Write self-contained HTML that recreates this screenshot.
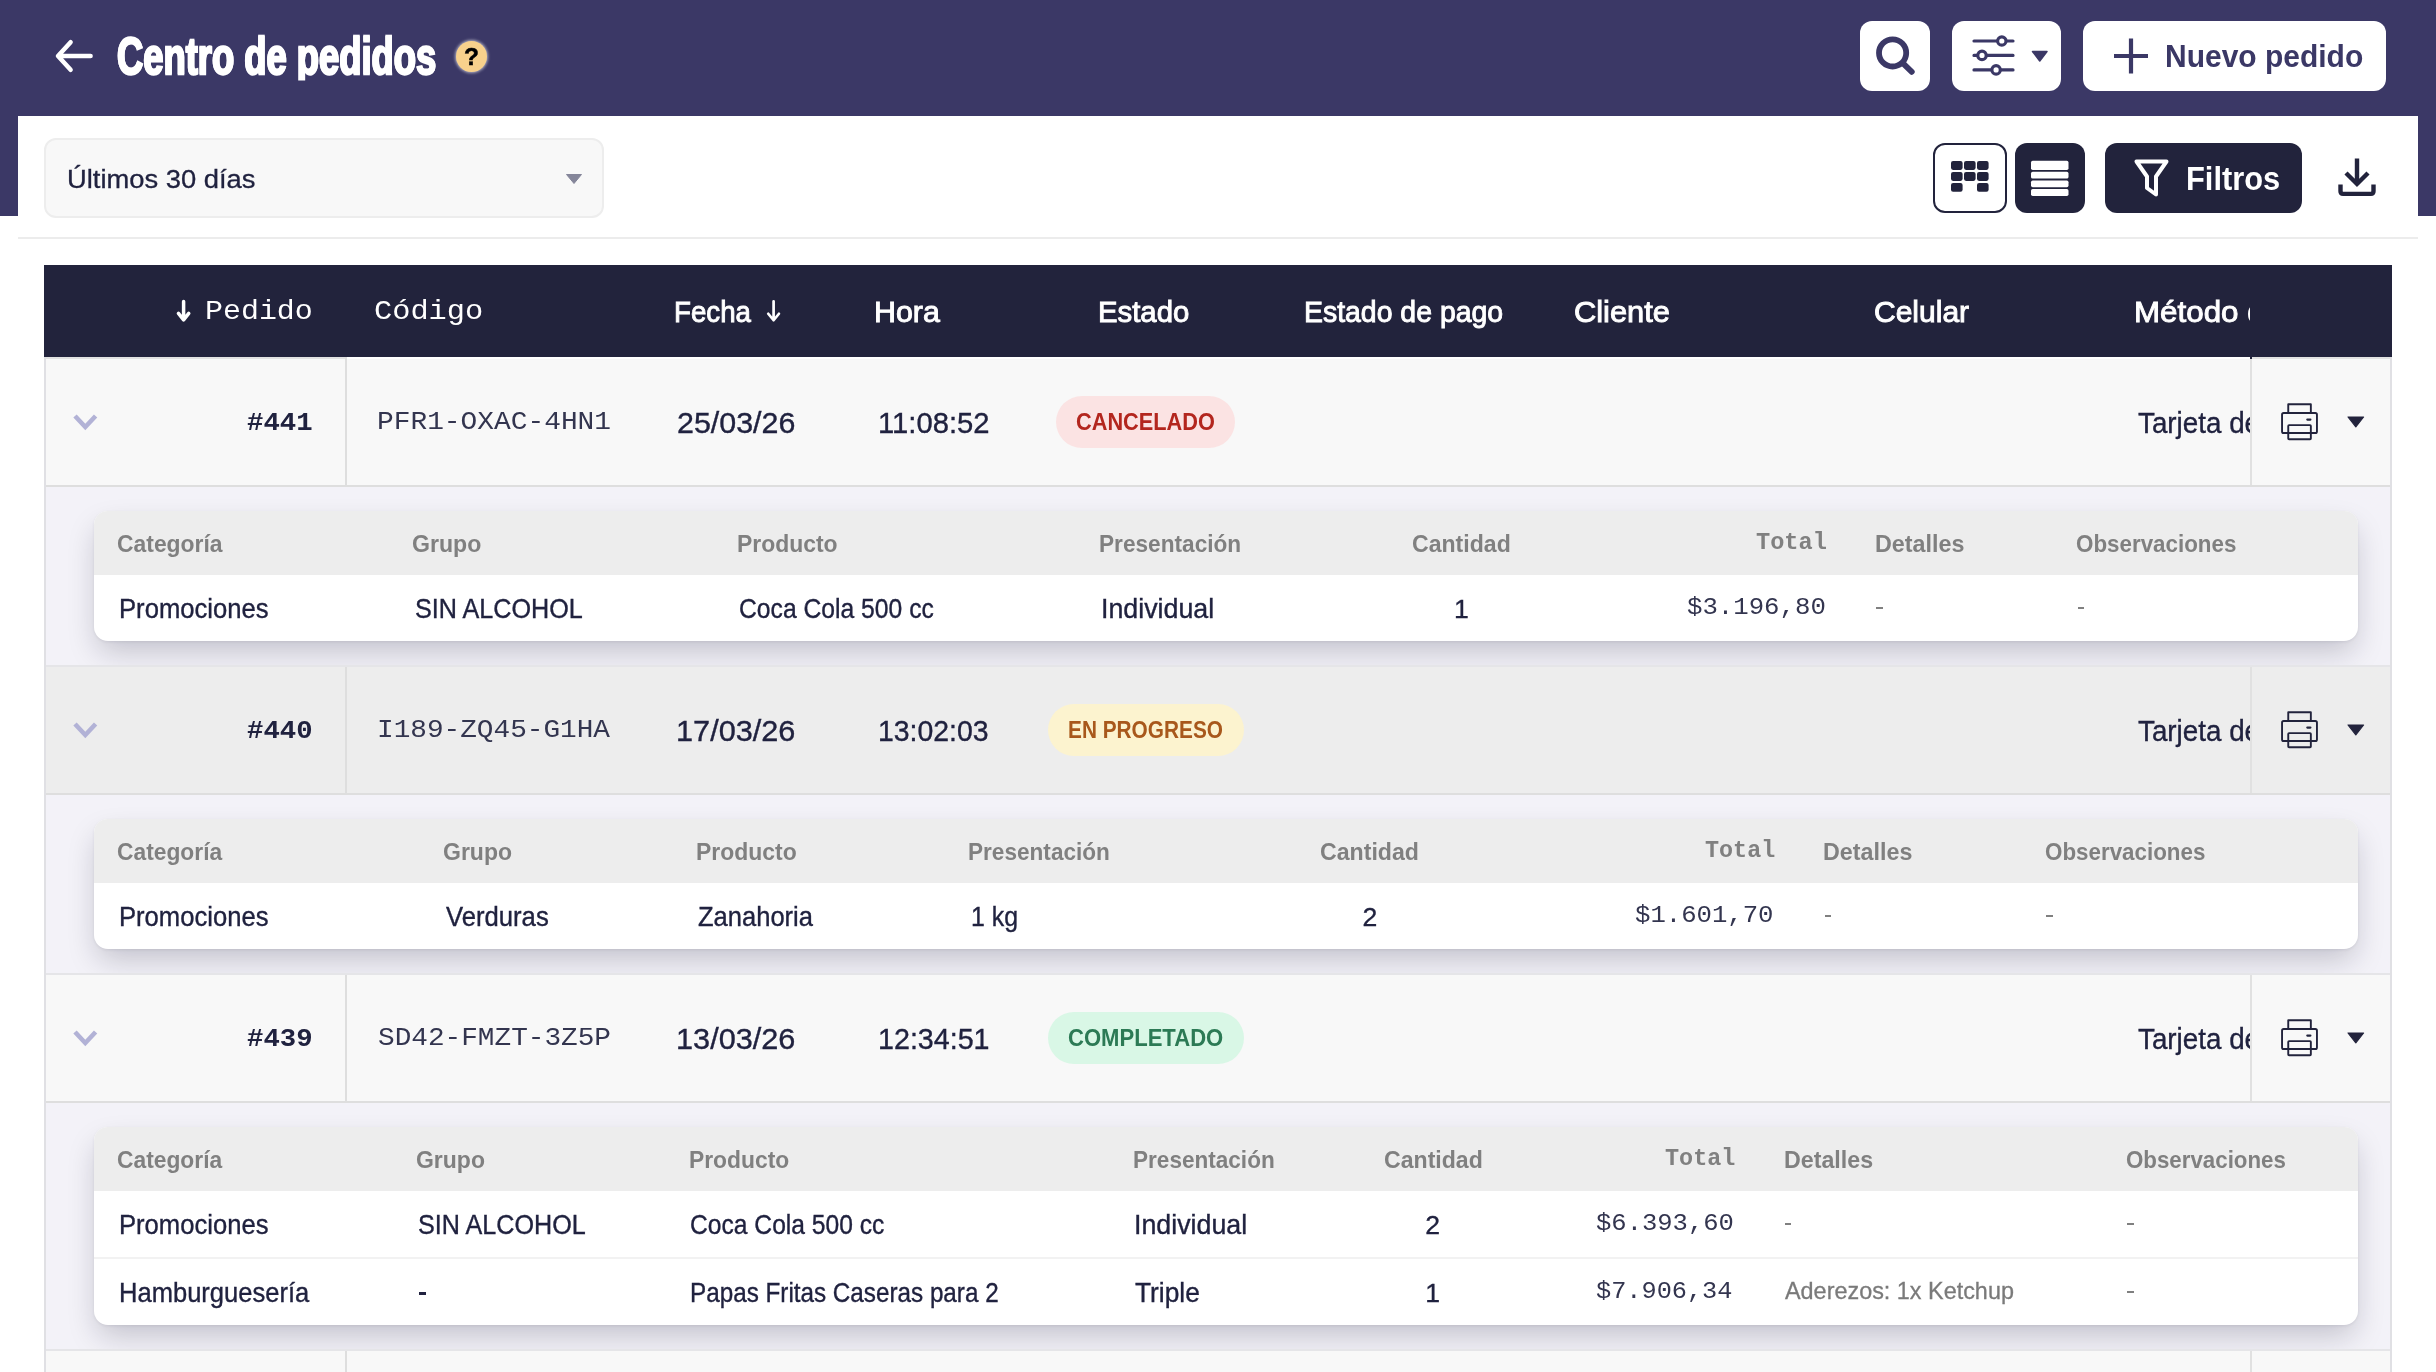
<!DOCTYPE html>
<html lang="es"><head><meta charset="utf-8"><title>Centro de pedidos</title>
<style>
html,body{margin:0;padding:0;}
body{width:2436px;height:1372px;overflow:hidden;background:#fff;position:relative;font-family:'Liberation Sans',sans-serif;}
.a{position:absolute;box-sizing:border-box;}
.t{position:absolute;white-space:pre;transform-origin:0 0;line-height:1;}
svg{position:absolute;overflow:visible;}
</style></head><body>
<div class="a" style="left:0;top:0;width:2436px;height:116px;background:#3b3866"></div>
<div class="a" style="left:0;top:116px;width:18px;height:100px;background:#3b3866"></div>
<div class="a" style="left:2418px;top:116px;width:18px;height:100px;background:#3b3866"></div>
<div class="a" style="left:18px;top:237px;width:2400px;height:2px;background:#ececec"></div>
<svg style="left:0;top:0" width="120" height="116"><path d="M90.6 56H58.4M70.6 42.2L58 56L70.6 69.8" fill="none" stroke="#fff" stroke-width="4.5" stroke-linecap="round" stroke-linejoin="round"/></svg>
<div class="a" style="left:456px;top:40.5px;width:31px;height:31px;border-radius:50%;background:#f8d18c;box-shadow:0 0 3px 1px rgba(255,255,255,.6)"></div>
<div class="a" style="left:1860px;top:21px;width:70px;height:70px;border-radius:12px;background:#fff"></div>
<div class="a" style="left:1952px;top:21px;width:109px;height:70px;border-radius:12px;background:#fff"></div>
<div class="a" style="left:2083px;top:21px;width:303px;height:70px;border-radius:12px;background:#fff"></div>
<svg style="left:0;top:0" width="2436" height="116"><circle cx="1892.6" cy="52.9" r="13.6" fill="none" stroke="#3b3866" stroke-width="5.8"/><path d="M1902.8 63.2L1911.8 71.8" stroke="#3b3866" stroke-width="5.8" stroke-linecap="round"/><g stroke="#3b3866" stroke-width="3.2" stroke-linecap="round" fill="#fff"><path d="M1974 41H2013M1974 55.4H2013M1974 69.9H2013"/><circle cx="2001.8" cy="41" r="4.2"/><circle cx="1982" cy="55.4" r="4.2"/><circle cx="1996.1" cy="69.9" r="4.2"/></g><path d="M2032.5 51.5h14.5l-7.25 9.5z" fill="#3b3866" stroke="#3b3866" stroke-width="1.5" stroke-linejoin="round"/><path d="M2114 56H2148M2131 38.5V73.5" stroke="#3b3866" stroke-width="4.2" stroke-linecap="butt"/></svg>
<div class="a" style="left:44px;top:138px;width:560px;height:80px;border-radius:12px;background:#f8f8f8;border:2px solid #ededed"></div>
<svg style="left:0;top:0" width="700" height="240"><path d="M566.5 174.5h15l-7.5 9z" fill="#85869a" stroke="#85869a" stroke-width="1" stroke-linejoin="round"/></svg>
<div class="a" style="left:1933px;top:143px;width:74px;height:70px;border-radius:12px;background:#fff;border:2.4px solid #22233c"></div>
<div class="a" style="left:2015px;top:143px;width:70px;height:70px;border-radius:12px;background:#22233c"></div>
<div class="a" style="left:2105px;top:143px;width:197px;height:70px;border-radius:12px;background:#22233c"></div>
<svg style="left:0;top:0" width="2436" height="240"><g fill="#22233c"><rect x="1951" y="161" width="11.6" height="8.9" rx="2.1"/><rect x="1951" y="172" width="11.6" height="8.9" rx="2.1"/><rect x="1951" y="182.9" width="11.6" height="8.9" rx="2.1"/><rect x="1964" y="161" width="11.6" height="8.9" rx="2.1"/><rect x="1964" y="172" width="11.6" height="8.9" rx="2.1"/><rect x="1977" y="161" width="11.6" height="8.9" rx="2.1"/><rect x="1977" y="172" width="11.6" height="8.9" rx="2.1"/><rect x="1977" y="182.9" width="11.6" height="8.9" rx="2.1"/></g><g fill="#fff"><rect x="2031" y="160.8" width="37.5" height="9.1" rx="1.7"/><rect x="2031" y="171.8" width="37.5" height="6.8" rx="1.7"/><rect x="2031" y="180.5" width="37.5" height="6.7" rx="1.7"/><rect x="2031" y="189.1" width="37.5" height="6.9" rx="1.7"/></g><path d="M2136.5 161.5H2166.5L2156 176.5V194.5L2147 188V176.5Z" fill="none" stroke="#fff" stroke-width="4" stroke-linejoin="round"/><g fill="none" stroke="#22233c" stroke-width="4.4" stroke-linecap="butt" stroke-linejoin="miter"><path d="M2357 158.6V183.5M2346 173L2357 184L2368 173"/><path d="M2340.5 184.5V191.3Q2340.5 193.9 2343.1 193.9H2370.9Q2373.5 193.9 2373.5 191.3V184.5" stroke-linejoin="round"/></g></svg>
<div class="a" style="left:44px;top:265px;width:2348px;height:92px;background:#22233c"></div>
<div class="a" style="left:44px;top:357px;width:2348px;height:128px;background:#f8f8f8"></div>
<div class="a" style="left:44px;top:667px;width:2348px;height:126px;background:#ededed"></div>
<div class="a" style="left:44px;top:975px;width:2348px;height:126px;background:#f8f8f8"></div>
<div class="a" style="left:44px;top:1351px;width:2348px;height:21px;background:#f8f8f8"></div>
<div class="a" style="left:44px;top:487px;width:2348px;height:178px;background:#f3f2f8"></div>
<div class="a" style="left:44px;top:795px;width:2348px;height:178px;background:#f3f2f8"></div>
<div class="a" style="left:44px;top:1103px;width:2348px;height:246px;background:#f3f2f8"></div>
<div class="a" style="left:44px;top:485px;width:2348px;height:2px;background:#dedede"></div>
<div class="a" style="left:44px;top:793px;width:2348px;height:2px;background:#dedede"></div>
<div class="a" style="left:44px;top:1101px;width:2348px;height:2px;background:#dedede"></div>
<div class="a" style="left:44px;top:665px;width:2348px;height:2px;background:#e5e5e8"></div>
<div class="a" style="left:44px;top:973px;width:2348px;height:2px;background:#e5e5e8"></div>
<div class="a" style="left:44px;top:1349px;width:2348px;height:2px;background:#e5e5e8"></div>
<div class="a" style="left:44px;top:357px;width:302px;height:2px;background:#e2e2e2"></div>
<div class="a" style="left:2250px;top:357px;width:142px;height:2px;background:#e2e2e2"></div>
<div class="a" style="left:347px;top:357px;width:1902.5px;height:2px;background:#fff"></div>
<div class="a" style="left:345px;top:357px;width:2px;height:128px;background:#dedede"></div>
<div class="a" style="left:2249.5px;top:357px;width:2px;height:128px;background:#e1e1e1"></div>
<div class="a" style="left:345px;top:667px;width:2px;height:126px;background:#dedede"></div>
<div class="a" style="left:2249.5px;top:667px;width:2px;height:126px;background:#e1e1e1"></div>
<div class="a" style="left:345px;top:975px;width:2px;height:126px;background:#dedede"></div>
<div class="a" style="left:2249.5px;top:975px;width:2px;height:126px;background:#e1e1e1"></div>
<div class="a" style="left:345px;top:1351px;width:2px;height:21px;background:#dedede"></div>
<div class="a" style="left:2249.5px;top:1351px;width:2px;height:21px;background:#e1e1e1"></div>
<div class="a" style="left:2249.5px;top:357px;width:2px;height:2px;background:#22233c"></div>
<div class="a" style="left:44px;top:357px;width:2px;height:1015px;background:#e0e0e4"></div>
<div class="a" style="left:2390px;top:357px;width:2px;height:1015px;background:#e0e0e4"></div>
<svg style="left:0;top:0" width="2436" height="360"><path d="M183.6 301.55V319.85M178.45 313.35L183.6 319.85L188.75 313.35" fill="none" stroke="#fff" stroke-width="3.5" stroke-linecap="round" stroke-linejoin="round"/><path d="M773.5999999999999 301.35V320.25M768.25 313.75L773.5999999999999 320.25L778.9499999999999 313.75" fill="none" stroke="#fff" stroke-width="2.7" stroke-linecap="round" stroke-linejoin="round"/></svg>
<svg style="left:0;top:0" width="2436" height="1372"><path d="M75 416.0L85.3 427.0L95.6 416.0" fill="none" stroke="#b2b2d6" stroke-width="4.6" stroke-linecap="butt" stroke-linejoin="miter"/><g fill="none" stroke="#22233c" stroke-width="1.9" stroke-linejoin="round"><path d="M2288.25 413.05V404.25H2310.85V413.05"/><rect x="2282.05" y="413.05" width="34.9" height="20" rx="1.6"/><rect x="2288.25" y="425.15" width="22.6" height="14.1" rx="0.8"/><path d="M2307.3 419.6H2310.4" stroke-width="2.2" stroke-linecap="round"/></g><path d="M2348 417h15.6l-7.8 9.8z" fill="#22233c" stroke="#22233c" stroke-width="1.2" stroke-linejoin="round"/><path d="M75 724.0L85.3 735.0L95.6 724.0" fill="none" stroke="#b2b2d6" stroke-width="4.6" stroke-linecap="butt" stroke-linejoin="miter"/><g fill="none" stroke="#22233c" stroke-width="1.9" stroke-linejoin="round"><path d="M2288.25 721.05V712.25H2310.85V721.05"/><rect x="2282.05" y="721.05" width="34.9" height="20" rx="1.6"/><rect x="2288.25" y="733.15" width="22.6" height="14.1" rx="0.8"/><path d="M2307.3 727.6H2310.4" stroke-width="2.2" stroke-linecap="round"/></g><path d="M2348 725h15.6l-7.8 9.8z" fill="#22233c" stroke="#22233c" stroke-width="1.2" stroke-linejoin="round"/><path d="M75 1032.0L85.3 1043.0L95.6 1032.0" fill="none" stroke="#b2b2d6" stroke-width="4.6" stroke-linecap="butt" stroke-linejoin="miter"/><g fill="none" stroke="#22233c" stroke-width="1.9" stroke-linejoin="round"><path d="M2288.25 1029.05V1020.25H2310.85V1029.05"/><rect x="2282.05" y="1029.05" width="34.9" height="20" rx="1.6"/><rect x="2288.25" y="1041.15" width="22.6" height="14.1" rx="0.8"/><path d="M2307.3 1035.6H2310.4" stroke-width="2.2" stroke-linecap="round"/></g><path d="M2348 1033h15.6l-7.8 9.8z" fill="#22233c" stroke="#22233c" stroke-width="1.2" stroke-linejoin="round"/></svg>
<div class="a" style="left:1056.0px;top:396px;width:179px;height:52px;border-radius:26px;background:#fbe3e3"></div>
<div class="a" style="left:1048.0px;top:704px;width:196px;height:52px;border-radius:26px;background:#fcf3cf"></div>
<div class="a" style="left:1048.0px;top:1012px;width:196px;height:52px;border-radius:26px;background:#d9f7e6"></div>
<div class="a" style="left:46px;top:487px;width:2344px;height:178px;overflow:hidden"><div class="a" style="left:48px;top:24px;width:2264px;height:130px;border-radius:14px;background:#fff;box-shadow:0 1px 3px rgba(20,20,45,.07),0 14px 30px -4px rgba(20,20,45,.22);overflow:hidden"><div class="a" style="left:0;top:0;width:100%;height:64px;background:#ededed"></div></div></div>
<div class="a" style="left:46px;top:795px;width:2344px;height:178px;overflow:hidden"><div class="a" style="left:48px;top:24px;width:2264px;height:130px;border-radius:14px;background:#fff;box-shadow:0 1px 3px rgba(20,20,45,.07),0 14px 30px -4px rgba(20,20,45,.22);overflow:hidden"><div class="a" style="left:0;top:0;width:100%;height:64px;background:#ededed"></div></div></div>
<div class="a" style="left:46px;top:1103px;width:2344px;height:246px;overflow:hidden"><div class="a" style="left:48px;top:24px;width:2264px;height:198px;border-radius:14px;background:#fff;box-shadow:0 1px 3px rgba(20,20,45,.07),0 14px 30px -4px rgba(20,20,45,.22);overflow:hidden"><div class="a" style="left:0;top:0;width:100%;height:64px;background:#ededed"></div><div class="a" style="left:0;top:130px;width:100%;height:2px;background:#f2f2f2"></div></div></div>
<div class="a" style="left:1876.0px;top:606.7px;width:6.8px;height:2.6px;background:#808080"></div>
<div class="a" style="left:2077.7px;top:606.7px;width:6.8px;height:2.6px;background:#808080"></div>
<div class="a" style="left:1824.7px;top:914.7px;width:6.8px;height:2.6px;background:#808080"></div>
<div class="a" style="left:2046.4px;top:914.7px;width:6.8px;height:2.6px;background:#808080"></div>
<div class="a" style="left:1784.6px;top:1222.7px;width:6.8px;height:2.6px;background:#808080"></div>
<div class="a" style="left:2126.9px;top:1222.7px;width:6.8px;height:2.6px;background:#808080"></div>
<div class="a" style="left:418.8px;top:1292.4px;width:7.6px;height:2.4px;background:#20223f"></div>
<div class="a" style="left:2126.9px;top:1290.7px;width:6.8px;height:2.6px;background:#808080"></div>
<div class="a" style="left:0;top:0;width:2436px;height:1372px;will-change:transform">
<span class="t" style="left:117.19px;top:31px;font:bold 51.6px/1 'Liberation Sans', sans-serif;color:#ffffff;transform:scaleX(0.7048);-webkit-text-stroke:2.3px #ffffff;text-shadow:1.1px 0 0 #fff,-1.1px 0 0 #fff;clip-path:inset(-8px -4px 2.10px -4px);">Centro de pedidos</span>
<span class="t" style="left:2165.11px;top:41px;font:bold 31.69px/1 'Liberation Sans', sans-serif;color:#3b3866;transform:scaleX(0.9462);">Nuevo pedido</span>
<span class="t" style="left:66.90px;top:166px;font:normal 26.02px/1 'Liberation Sans', sans-serif;color:#20223f;transform:scaleX(1.0514);-webkit-text-stroke:0.3px #20223f;">Últimos 30 días</span>
<span class="t" style="left:2186.19px;top:161px;font:bold 34.01px/1 'Liberation Sans', sans-serif;color:#ffffff;transform:scaleX(0.9061);">Filtros</span>
<span class="t" style="left:204.81px;top:298px;font:normal 27.4px/1 'Liberation Mono', monospace;color:#ffffff;transform:scaleX(1.0926);">Pedido</span>
<span class="t" style="left:373.89px;top:298px;font:normal 27.4px/1 'Liberation Mono', monospace;color:#ffffff;transform:scaleX(1.1072);">Código</span>
<span class="t" style="left:673.98px;top:296px;font:normal 30.38px/1 'Liberation Sans', sans-serif;color:#ffffff;transform:scaleX(0.9112);-webkit-text-stroke:0.95px #ffffff;">Fecha</span>
<span class="t" style="left:874.00px;top:296px;font:normal 30.38px/1 'Liberation Sans', sans-serif;color:#ffffff;transform:scaleX(1.0009);-webkit-text-stroke:0.95px #ffffff;">Hora</span>
<span class="t" style="left:1098.07px;top:296px;font:normal 30.38px/1 'Liberation Sans', sans-serif;color:#ffffff;transform:scaleX(0.9654);-webkit-text-stroke:0.95px #ffffff;">Estado</span>
<span class="t" style="left:1303.73px;top:296px;font:normal 30.38px/1 'Liberation Sans', sans-serif;color:#ffffff;transform:scaleX(0.9356);-webkit-text-stroke:0.95px #ffffff;">Estado de pago</span>
<span class="t" style="left:1573.99px;top:296px;font:normal 30.38px/1 'Liberation Sans', sans-serif;color:#ffffff;transform:scaleX(1.0145);-webkit-text-stroke:0.95px #ffffff;">Cliente</span>
<span class="t" style="left:1874.01px;top:296px;font:normal 30.38px/1 'Liberation Sans', sans-serif;color:#ffffff;transform:scaleX(0.9883);-webkit-text-stroke:0.95px #ffffff;">Celular</span>
<span class="t" style="left:247.00px;top:410px;font:bold 26.3px/1 'Liberation Mono', monospace;color:#20223f;transform:scaleX(1.0394);">#441</span>
<span class="t" style="left:377.28px;top:409px;font:normal 26.3px/1 'Liberation Mono', monospace;color:#33354f;transform:scaleX(1.0594);">PFR1-OXAC-4HN1</span>
<span class="t" style="left:676.96px;top:408px;font:normal 29.36px/1 'Liberation Sans', sans-serif;color:#20223f;transform:scaleX(1.0358);-webkit-text-stroke:0.35px #20223f;">25/03/26</span>
<span class="t" style="left:877.71px;top:408px;font:normal 29.36px/1 'Liberation Sans', sans-serif;color:#20223f;transform:scaleX(0.9956);-webkit-text-stroke:0.35px #20223f;">11:08:52</span>
<span class="t" style="left:247.00px;top:718px;font:bold 26.3px/1 'Liberation Mono', monospace;color:#20223f;transform:scaleX(1.0394);">#440</span>
<span class="t" style="left:377.29px;top:717px;font:normal 26.3px/1 'Liberation Mono', monospace;color:#33354f;transform:scaleX(1.0545);">I189-ZQ45-G1HA</span>
<span class="t" style="left:675.91px;top:716px;font:normal 29.36px/1 'Liberation Sans', sans-serif;color:#20223f;transform:scaleX(1.0451);-webkit-text-stroke:0.35px #20223f;">17/03/26</span>
<span class="t" style="left:877.77px;top:716px;font:normal 29.36px/1 'Liberation Sans', sans-serif;color:#20223f;transform:scaleX(0.9673);-webkit-text-stroke:0.35px #20223f;">13:02:03</span>
<span class="t" style="left:247.00px;top:1026px;font:bold 26.3px/1 'Liberation Mono', monospace;color:#20223f;transform:scaleX(1.0394);">#439</span>
<span class="t" style="left:378.35px;top:1025px;font:normal 26.3px/1 'Liberation Mono', monospace;color:#33354f;transform:scaleX(1.0545);">SD42-FMZT-3Z5P</span>
<span class="t" style="left:675.91px;top:1024px;font:normal 29.36px/1 'Liberation Sans', sans-serif;color:#20223f;transform:scaleX(1.0451);-webkit-text-stroke:0.35px #20223f;">13/03/26</span>
<span class="t" style="left:877.75px;top:1024px;font:normal 29.36px/1 'Liberation Sans', sans-serif;color:#20223f;transform:scaleX(0.9761);-webkit-text-stroke:0.35px #20223f;">12:34:51</span>
<span class="t" style="left:1076.00px;top:411px;font:bold 23.11px/1 'Liberation Sans', sans-serif;color:#b3261e;transform:scaleX(0.9409);">CANCELADO</span>
<span class="t" style="left:1067.90px;top:719px;font:bold 23.11px/1 'Liberation Sans', sans-serif;color:#a8581c;transform:scaleX(0.9007);">EN PROGRESO</span>
<span class="t" style="left:1068.00px;top:1027px;font:bold 23.11px/1 'Liberation Sans', sans-serif;color:#2c7a55;transform:scaleX(0.9546);">COMPLETADO</span>
<div class="a" style="left:2100px;top:0;width:150px;height:1372px;overflow:hidden"><span class="t" style="left:33.94px;top:296px;font:normal 30.38px/1 'Liberation Sans', sans-serif;color:#ffffff;transform:scaleX(1.0313);-webkit-text-stroke:0.95px #ffffff;">Método de pago</span></div>
<div class="a" style="left:2100px;top:0;width:150px;height:1372px;overflow:hidden"><span class="t" style="left:37.80px;top:408px;font:normal 29.65px/1 'Liberation Sans', sans-serif;color:#20223f;transform:scaleX(0.9376);-webkit-text-stroke:0.35px #20223f;">Tarjeta de crédito</span></div>
<div class="a" style="left:2100px;top:0;width:150px;height:1372px;overflow:hidden"><span class="t" style="left:37.80px;top:716px;font:normal 29.65px/1 'Liberation Sans', sans-serif;color:#20223f;transform:scaleX(0.9376);-webkit-text-stroke:0.35px #20223f;">Tarjeta de crédito</span></div>
<div class="a" style="left:2100px;top:0;width:150px;height:1372px;overflow:hidden"><span class="t" style="left:37.80px;top:1024px;font:normal 29.65px/1 'Liberation Sans', sans-serif;color:#20223f;transform:scaleX(0.9376);-webkit-text-stroke:0.35px #20223f;">Tarjeta de crédito</span></div>
<span class="t" style="left:464.10px;top:45px;font:bold 24.5px/1 'Liberation Sans', sans-serif;color:#000;transform:scaleX(1.0000);-webkit-text-stroke:0.5px #000;">?</span>
<span class="t" style="left:116.76px;top:532px;font:bold 24.27px/1 'Liberation Sans', sans-serif;color:#808080;transform:scaleX(0.9432);">Categoría</span>
<span class="t" style="left:412.45px;top:532px;font:bold 24.27px/1 'Liberation Sans', sans-serif;color:#808080;transform:scaleX(0.9526);">Grupo</span>
<span class="t" style="left:737.46px;top:532px;font:bold 24.27px/1 'Liberation Sans', sans-serif;color:#808080;transform:scaleX(0.9449);">Producto</span>
<span class="t" style="left:1099.07px;top:532px;font:bold 24.27px/1 'Liberation Sans', sans-serif;color:#808080;transform:scaleX(0.9331);">Presentación</span>
<span class="t" style="left:1412.05px;top:532px;font:bold 24.27px/1 'Liberation Sans', sans-serif;color:#808080;transform:scaleX(0.9511);">Cantidad</span>
<span class="t" style="left:1756.40px;top:532px;font:bold 23px/1 'Liberation Mono', monospace;color:#808080;transform:scaleX(1.0277);">Total</span>
<span class="t" style="left:1875.04px;top:532px;font:bold 24.27px/1 'Liberation Sans', sans-serif;color:#808080;transform:scaleX(0.9610);">Detalles</span>
<span class="t" style="left:2076.08px;top:532px;font:bold 24.27px/1 'Liberation Sans', sans-serif;color:#808080;transform:scaleX(0.9217);">Observaciones</span>
<span class="t" style="left:118.79px;top:596px;font:normal 26.89px/1 'Liberation Sans', sans-serif;color:#20223f;transform:scaleX(0.9540);-webkit-text-stroke:0.35px #20223f;">Promociones</span>
<span class="t" style="left:414.76px;top:596px;font:normal 26.89px/1 'Liberation Sans', sans-serif;color:#20223f;transform:scaleX(0.9362);-webkit-text-stroke:0.35px #20223f;">SIN ALCOHOL</span>
<span class="t" style="left:739.08px;top:596px;font:normal 26.89px/1 'Liberation Sans', sans-serif;color:#20223f;transform:scaleX(0.9184);-webkit-text-stroke:0.35px #20223f;">Coca Cola 500 cc</span>
<span class="t" style="left:1100.81px;top:596px;font:normal 26.89px/1 'Liberation Sans', sans-serif;color:#20223f;transform:scaleX(0.9966);-webkit-text-stroke:0.35px #20223f;">Individual</span>
<span class="t" style="left:1454.00px;top:596px;font:normal 26.6px/1 'Liberation Sans', sans-serif;color:#20223f;transform:scaleX(1.0000);-webkit-text-stroke:0.35px #20223f;">1</span>
<span class="t" style="left:1687.00px;top:596px;font:normal 24px/1 'Liberation Mono', monospace;color:#33354f;transform:scaleX(1.0708);">$3.196,80</span>
<span class="t" style="left:117.06px;top:840px;font:bold 24.27px/1 'Liberation Sans', sans-serif;color:#808080;transform:scaleX(0.9396);">Categoría</span>
<span class="t" style="left:442.95px;top:840px;font:bold 24.27px/1 'Liberation Sans', sans-serif;color:#808080;transform:scaleX(0.9484);">Grupo</span>
<span class="t" style="left:695.55px;top:840px;font:bold 24.27px/1 'Liberation Sans', sans-serif;color:#808080;transform:scaleX(0.9458);">Producto</span>
<span class="t" style="left:968.37px;top:840px;font:bold 24.27px/1 'Liberation Sans', sans-serif;color:#808080;transform:scaleX(0.9311);">Presentación</span>
<span class="t" style="left:1320.05px;top:840px;font:bold 24.27px/1 'Liberation Sans', sans-serif;color:#808080;transform:scaleX(0.9531);">Cantidad</span>
<span class="t" style="left:1704.50px;top:840px;font:bold 23px/1 'Liberation Mono', monospace;color:#808080;transform:scaleX(1.0175);">Total</span>
<span class="t" style="left:1823.34px;top:840px;font:bold 24.27px/1 'Liberation Sans', sans-serif;color:#808080;transform:scaleX(0.9599);">Detalles</span>
<span class="t" style="left:2045.08px;top:840px;font:bold 24.27px/1 'Liberation Sans', sans-serif;color:#808080;transform:scaleX(0.9217);">Observaciones</span>
<span class="t" style="left:118.69px;top:904px;font:normal 26.89px/1 'Liberation Sans', sans-serif;color:#20223f;transform:scaleX(0.9533);-webkit-text-stroke:0.35px #20223f;">Promociones</span>
<span class="t" style="left:446.00px;top:904px;font:normal 26.89px/1 'Liberation Sans', sans-serif;color:#20223f;transform:scaleX(0.9549);-webkit-text-stroke:0.35px #20223f;">Verduras</span>
<span class="t" style="left:698.00px;top:904px;font:normal 26.89px/1 'Liberation Sans', sans-serif;color:#20223f;transform:scaleX(0.9499);-webkit-text-stroke:0.35px #20223f;">Zanahoria</span>
<span class="t" style="left:970.65px;top:904px;font:normal 26.89px/1 'Liberation Sans', sans-serif;color:#20223f;transform:scaleX(0.9258);-webkit-text-stroke:0.35px #20223f;">1 kg</span>
<span class="t" style="left:1362.50px;top:904px;font:normal 26.6px/1 'Liberation Sans', sans-serif;color:#20223f;transform:scaleX(1.0000);-webkit-text-stroke:0.35px #20223f;">2</span>
<span class="t" style="left:1635.00px;top:904px;font:normal 24px/1 'Liberation Mono', monospace;color:#33354f;transform:scaleX(1.0685);">$1.601,70</span>
<span class="t" style="left:117.06px;top:1148px;font:bold 24.27px/1 'Liberation Sans', sans-serif;color:#808080;transform:scaleX(0.9396);">Categoría</span>
<span class="t" style="left:415.85px;top:1148px;font:bold 24.27px/1 'Liberation Sans', sans-serif;color:#808080;transform:scaleX(0.9470);">Grupo</span>
<span class="t" style="left:688.56px;top:1148px;font:bold 24.27px/1 'Liberation Sans', sans-serif;color:#808080;transform:scaleX(0.9410);">Producto</span>
<span class="t" style="left:1133.07px;top:1148px;font:bold 24.27px/1 'Liberation Sans', sans-serif;color:#808080;transform:scaleX(0.9298);">Presentación</span>
<span class="t" style="left:1383.55px;top:1148px;font:bold 24.27px/1 'Liberation Sans', sans-serif;color:#808080;transform:scaleX(0.9521);">Cantidad</span>
<span class="t" style="left:1665.20px;top:1148px;font:bold 23px/1 'Liberation Mono', monospace;color:#808080;transform:scaleX(1.0204);">Total</span>
<span class="t" style="left:1784.04px;top:1148px;font:bold 24.27px/1 'Liberation Sans', sans-serif;color:#808080;transform:scaleX(0.9577);">Detalles</span>
<span class="t" style="left:2125.98px;top:1148px;font:bold 24.27px/1 'Liberation Sans', sans-serif;color:#808080;transform:scaleX(0.9188);">Observaciones</span>
<span class="t" style="left:118.69px;top:1212px;font:normal 26.89px/1 'Liberation Sans', sans-serif;color:#20223f;transform:scaleX(0.9533);-webkit-text-stroke:0.35px #20223f;">Promociones</span>
<span class="t" style="left:417.86px;top:1212px;font:normal 26.89px/1 'Liberation Sans', sans-serif;color:#20223f;transform:scaleX(0.9357);-webkit-text-stroke:0.35px #20223f;">SIN ALCOHOL</span>
<span class="t" style="left:690.38px;top:1212px;font:normal 26.89px/1 'Liberation Sans', sans-serif;color:#20223f;transform:scaleX(0.9165);-webkit-text-stroke:0.35px #20223f;">Coca Cola 500 cc</span>
<span class="t" style="left:1134.31px;top:1212px;font:normal 26.89px/1 'Liberation Sans', sans-serif;color:#20223f;transform:scaleX(0.9966);-webkit-text-stroke:0.35px #20223f;">Individual</span>
<span class="t" style="left:1425.30px;top:1212px;font:normal 26.6px/1 'Liberation Sans', sans-serif;color:#20223f;transform:scaleX(1.0000);-webkit-text-stroke:0.35px #20223f;">2</span>
<span class="t" style="left:1595.60px;top:1212px;font:normal 24px/1 'Liberation Mono', monospace;color:#33354f;transform:scaleX(1.0638);">$6.393,60</span>
<span class="t" style="left:118.70px;top:1280px;font:normal 26.89px/1 'Liberation Sans', sans-serif;color:#20223f;transform:scaleX(0.9504);-webkit-text-stroke:0.35px #20223f;">Hamburguesería</span>
<span class="t" style="left:690.20px;top:1280px;font:normal 26.89px/1 'Liberation Sans', sans-serif;color:#20223f;transform:scaleX(0.9023);-webkit-text-stroke:0.35px #20223f;">Papas Fritas Caseras para 2</span>
<span class="t" style="left:1135.30px;top:1280px;font:normal 26.89px/1 'Liberation Sans', sans-serif;color:#20223f;transform:scaleX(0.9792);-webkit-text-stroke:0.35px #20223f;">Triple</span>
<span class="t" style="left:1425.30px;top:1280px;font:normal 26.6px/1 'Liberation Sans', sans-serif;color:#20223f;transform:scaleX(1.0000);-webkit-text-stroke:0.35px #20223f;">1</span>
<span class="t" style="left:1595.60px;top:1280px;font:normal 24px/1 'Liberation Mono', monospace;color:#33354f;transform:scaleX(1.0525);">$7.906,34</span>
<span class="t" style="left:1784.50px;top:1279px;font:normal 24.13px/1 'Liberation Sans', sans-serif;color:#7a7a7a;transform:scaleX(0.9698);-webkit-text-stroke:0.3px #7a7a7a;">Aderezos: 1x Ketchup</span>
</div>
</body></html>
